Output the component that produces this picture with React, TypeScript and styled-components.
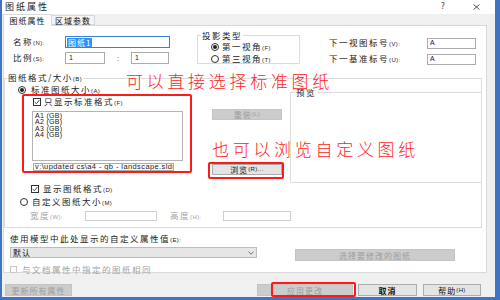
import React from 'react'
import styled, { createGlobalStyle } from 'styled-components'

const CJK = `"Noto Sans CJK SC", "Noto Sans", sans-serif`
const LATIN = `"Liberation Sans", "Noto Sans CJK SC", sans-serif`

const GlobalStyle = createGlobalStyle`
  html, body { margin: 0; padding: 0; }
  body {
    width: 500px;
    height: 300px;
    overflow: hidden;
    background: #3f73c4;
    font-family: ${CJK};
    color: #1b1b1b;
  }
  * { box-sizing: border-box; }
`

const Window = styled.div`
  margin-left: 2px;
  width: 493px;
  height: 297px;
  background: #f0f0f0;
  display: flex;
  flex-direction: column;
`

const TitleBar = styled.div`
  flex: none;
  height: 14px;
  background: #fff;
  display: flex;
  align-items: center;
  padding: 0 15px 0 3px;
`

const TitleText = styled.span`
  font-size: 9px;
  line-height: 10px;
  letter-spacing: 2px;
  color: #222;
`

const Spacer = styled.div`
  flex: 1;
`

const HelpGlyph = styled.span`
  font-family: "DejaVu Sans", sans-serif;
  font-size: 8px;
  line-height: 10px;
  color: #444;
  margin-right: 28px;
`

const TabStrip = styled.div`
  flex: none;
  height: 11px;
  display: flex;
  align-items: flex-end;
  padding-left: 1px;
`

const Tab = styled.div<{ $active?: boolean; $width: number }>`
  position: relative;
  z-index: 1;
  width: ${p => p.$width}px;
  height: ${p => (p.$active ? 12 : 10)}px;
  margin-bottom: ${p => (p.$active ? -1 : 0)}px;
  background: ${p => (p.$active ? '#fff' : '#f4f4f4')};
  border: 1px solid #d9d9d9;
  border-bottom: ${p => (p.$active ? 'none' : '1px solid #d9d9d9')};
  border-left: ${p => (p.$active ? '1px solid #d9d9d9' : 'none')};
  display: flex;
  align-items: center;
  justify-content: center;
  font-size: 8px;
  letter-spacing: 1px;
  line-height: 9px;
  color: #111;
`

const Panel = styled.div`
  flex: none;
  position: relative;
  margin-left: 1px;
  width: 484px;
  height: 248px;
  background: #fff;
  border: 1px solid #d9d9d9;
  display: flex;
  flex-direction: column;
`

const TopSection = styled.div`
  display: flex;
  align-items: flex-start;
  padding-top: 4px;
`

const LeftFields = styled.div`
  margin: 6px 0 0 9px;
  width: 184px;
  display: grid;
  grid-template-columns: 52px auto;
  row-gap: 4px;
  align-items: center;
`

const RightFields = styled.div`
  margin: 7px 0 0 29px;
  display: grid;
  grid-template-columns: 98px 49px;
  row-gap: 4px;
  align-items: center;
`

const FieldLabel = styled.span<{ $muted?: boolean }>`
  font-size: 8.5px;
  letter-spacing: 1.5px;
  line-height: 10px;
  white-space: nowrap;
  color: ${p => (p.$muted ? '#a3a3a3' : '#1b1b1b')};
`

const Mn = styled.span`
  font-family: ${LATIN};
  font-size: 6px;
  letter-spacing: 0.4px;
`

const Field = styled.div<{ $w: number; $h: number; $focus?: boolean; $disabled?: boolean; $pad?: number }>`
  flex: none;
  width: ${p => p.$w}px;
  height: ${p => p.$h}px;
  border: 1px solid ${p => (p.$focus ? '#3b7fdb' : p.$disabled ? '#d0d0d0' : '#ababab')};
  background: #fff;
  display: flex;
  align-items: center;
  padding-left: ${p => p.$pad ?? 3}px;
  font-family: ${LATIN};
  font-size: 7px;
  line-height: 8px;
  color: #222;
  white-space: nowrap;
  overflow: hidden;
`

const Selected = styled.span`
  background: #3390ff;
  color: #fff;
  font-family: ${CJK};
  font-size: 8px;
  letter-spacing: 1px;
  line-height: 9px;
  padding: 0 1px;
`

const RatioRow = styled.div`
  display: flex;
  align-items: center;
`

const Colon = styled.span`
  width: 26px;
  text-align: center;
  font-family: ${LATIN};
  font-size: 7px;
  color: #333;
`

const Group = styled.fieldset<{ $w?: number; $h?: number; $noRight?: boolean }>`
  margin: 0;
  padding: 0;
  min-width: 0;
  border: 1px solid #dcdcdc;
  ${p => (p.$noRight ? 'border-right: none;' : '')}
  ${p => (p.$w ? `width: ${p.$w}px;` : '')}
  ${p => (p.$h ? `height: ${p.$h}px;` : '')}
  display: flex;
  flex-direction: column;
`

const Legend = styled.legend<{ $offset: number }>`
  margin-left: ${p => p.$offset}px;
  padding: 0 1px;
  font-size: 8.5px;
  letter-spacing: 1.5px;
  line-height: 10px;
  color: #1b1b1b;
  white-space: nowrap;
`

const FormatGroup = styled(Group)`
  margin-top: 7px;
  width: 478px;
  padding-bottom: 6px;
`

const OptionRow = styled.div<{ $top: number; $indent: number; $gap: number; $muted?: boolean }>`
  display: flex;
  align-items: center;
  height: 8px;
  margin-top: ${p => p.$top}px;
  padding-left: ${p => p.$indent}px;
  gap: ${p => p.$gap}px;
  font-size: 8.5px;
  letter-spacing: 1.5px;
  line-height: 8px;
  white-space: nowrap;
  color: ${p => (p.$muted ? '#a3a3a3' : '#1b1b1b')};
`

const Radio = styled.span<{ $on?: boolean }>`
  flex: none;
  width: 8px;
  height: 8px;
  border-radius: 50%;
  border: 1px solid #333;
  background: #fff;
  display: flex;
  align-items: center;
  justify-content: center;
  &::after {
    content: '';
    width: 4px;
    height: 4px;
    border-radius: 50%;
    background: ${p => (p.$on ? '#222' : 'transparent')};
  }
`

const Box = styled.span<{ $size?: number; $disabled?: boolean }>`
  flex: none;
  width: ${p => p.$size ?? 8}px;
  height: ${p => p.$size ?? 8}px;
  border: 1px solid ${p => (p.$disabled ? '#c8c8c8' : '#333')};
  background: #fff;
  display: flex;
  align-items: center;
  justify-content: center;
`

const Check = ({ on, size, disabled }: { on?: boolean; size?: number; disabled?: boolean }) => (
  <Box $size={size} $disabled={disabled}>
    {on && (
      <svg width="6" height="6" viewBox="0 0 6 6">
        <path d="M0.7 3.1 L2.4 4.7 L5.3 1.1" stroke="#333" strokeWidth="0.9" fill="none" />
      </svg>
    )}
  </Box>
)

const MainRow = styled.div`
  display: flex;
  align-items: flex-start;
`

const RedFrame = styled.div`
  border: 2px solid #ff1a1a;
  border-radius: 2px;
`

const StandardBox = styled(RedFrame)`
  margin-left: 17px;
  width: 170px;
  height: 79px;
  padding-top: 2px;
  display: flex;
  flex-direction: column;
`

const ListBox = styled.div`
  margin: 5px 0 0 8px;
  width: 151px;
  height: 50px;
  border: 1px solid #b4b4b4;
  padding: 1px 0 0 2px;
  font-family: ${LATIN};
  font-size: 7px;
  letter-spacing: 0.3px;
  line-height: 6.3px;
  color: #222;
`

const PathField = styled(Field)`
  margin: 2px 0 0 9px;
  font-size: 7.5px;
  letter-spacing: 0.4px;
`

const MiddleCol = styled.div`
  margin-left: 16px;
  width: 76px;
  display: flex;
  flex-direction: column;
`

const Button = styled.button<{ $w: number; $h?: number; $disabled?: boolean; $bold?: boolean }>`
  flex: none;
  width: ${p => p.$w}px;
  height: ${p => p.$h ?? 12}px;
  margin: 0;
  padding: 0;
  background: ${p => (p.$disabled ? '#cccccc' : '#e4e4e4')};
  border: 1px solid ${p => (p.$disabled ? '#c4c4c4' : '#adadad')};
  color: ${p => (p.$disabled ? '#9d9d9d' : '#111')};
  font-family: ${CJK};
  font-size: 8px;
  font-weight: ${p => (p.$bold ? 700 : 400)};
  letter-spacing: 1px;
  line-height: 9px;
  display: flex;
  align-items: center;
  justify-content: center;
  white-space: nowrap;
`

const ReloadButton = styled(Button)`
  margin: 15px 0 0 4px;
`

const BrowseFrame = styled(RedFrame)`
  margin-top: 42px;
  padding: 0 0 2px 2px;
`

const PreviewGroup = styled(Group)`
  margin: -7px 0 0 6px;
  flex: 1;
  height: 96px;
`

const SizeRow = styled.div`
  display: flex;
  align-items: center;
  height: 10px;
  margin-top: 5px;
  padding-left: 25px;
`

const SizeLabel = styled(FieldLabel)<{ $w: number; $ml?: number }>`
  width: ${p => p.$w}px;
  margin-left: ${p => p.$ml ?? 0}px;
`

const PropLabel = styled(FieldLabel)`
  margin: 5px 0 0 6px;
`

const SelectRow = styled.div`
  display: flex;
  align-items: flex-start;
  margin-top: 2px;
`

const Select = styled.div`
  margin-left: 6px;
  width: 247px;
  height: 11px;
  background: #e6e6e6;
  border: 1px solid #bdbdbd;
  display: flex;
  align-items: center;
  justify-content: space-between;
  padding: 0 2px 0 2px;
  font-size: 8px;
  letter-spacing: 1px;
  line-height: 9px;
  color: #111;
`

const PickButton = styled(Button)`
  margin: 2px 0 0 38px;
`

const Annotation = styled.div<{ $x: number; $y: number }>`
  position: absolute;
  left: ${p => p.$x}px;
  top: ${p => p.$y}px;
  font-size: 17px;
  font-weight: 300;
  line-height: 17px;
  letter-spacing: 3.7px;
  color: #ff2424;
  white-space: nowrap;
  pointer-events: none;
`

const BottomBar = styled.div`
  position: relative;
  flex: 1;
  display: flex;
  align-items: flex-start;
  padding-top: 11px;
`

const ApplyMark = styled(RedFrame)`
  position: absolute;
  left: 269px;
  top: 9px;
  width: 85px;
  height: 15px;
`

const BarButton = styled(Button)<{ $ml: number }>`
  margin-left: ${p => p.$ml}px;
`

const CloseIcon = () => (
  <svg width="7" height="6" viewBox="0 0 7 6">
    <path d="M0.5 0.5 L6.5 5.5 M0.5 5.5 L6.5 0.5" stroke="#444" strokeWidth="0.9" />
  </svg>
)

const Chevron = () => (
  <svg width="6" height="4" viewBox="0 0 6 4">
    <path d="M0.5 0.8 L3 3.2 L5.5 0.8" stroke="#555" strokeWidth="0.8" fill="none" />
  </svg>
)

const sheets = ['A1 (GB)', 'A2 (GB)', 'A3 (GB)', 'A4 (GB)']

export default function App() {
  return (
    <>
      <GlobalStyle />
      <Window>
        <TitleBar>
          <TitleText>图纸属性</TitleText>
          <Spacer />
          <HelpGlyph>?</HelpGlyph>
          <CloseIcon />
        </TitleBar>

        <TabStrip>
          <Tab $active $width={49}>图纸属性</Tab>
          <Tab $width={43}>区域参数</Tab>
        </TabStrip>

        <Panel>
          <TopSection>
            <LeftFields>
              <FieldLabel>名称<Mn>(N):</Mn></FieldLabel>
              <Field $w={105} $h={12} $focus $pad={1}>
                <Selected>图纸1</Selected>
              </Field>
              <FieldLabel>比例<Mn>(S):</Mn></FieldLabel>
              <RatioRow>
                <Field $w={40} $h={12}>1</Field>
                <Colon>:</Colon>
                <Field $w={38} $h={12}>1</Field>
              </RatioRow>
            </LeftFields>

            <Group $w={103} $h={34}>
              <Legend $offset={3}>投影类型</Legend>
              <OptionRow $top={3} $indent={13} $gap={3}>
                <Radio $on />
                <span>第一视角<Mn>(F)</Mn></span>
              </OptionRow>
              <OptionRow $top={4} $indent={13} $gap={3}>
                <Radio />
                <span>第三视角<Mn>(T)</Mn></span>
              </OptionRow>
            </Group>

            <RightFields>
              <FieldLabel>下一视图标号<Mn>(V):</Mn></FieldLabel>
              <Field $w={49} $h={11} $pad={2}>A</Field>
              <FieldLabel>下一基准标号<Mn>(U):</Mn></FieldLabel>
              <Field $w={49} $h={11} $pad={2}>A</Field>
            </RightFields>
          </TopSection>

          <FormatGroup>
            <Legend $offset={2}>图纸格式/大小<Mn>(B)</Mn></Legend>
            <OptionRow $top={2} $indent={13} $gap={5}>
              <Radio $on />
              <span>标准图纸大小<Mn>(A)</Mn></span>
            </OptionRow>

            <MainRow>
              <StandardBox>
                <OptionRow $top={0} $indent={9} $gap={3}>
                  <Check on />
                  <span>只显示标准格式<Mn>(F)</Mn></span>
                </OptionRow>
                <ListBox>
                  {sheets.map(s => (
                    <div key={s}>{s}</div>
                  ))}
                </ListBox>
                <PathField $w={141} $h={8} $pad={1}>
                  v:\updated cs\a4 - gb - landscape.sldr
                </PathField>
              </StandardBox>

              <MiddleCol>
                <ReloadButton $w={70} $h={11} $disabled>重装<Mn>(L)</Mn></ReloadButton>
                <BrowseFrame>
                  <Button $w={70} $h={11}>浏览<Mn>(R)...</Mn></Button>
                </BrowseFrame>
              </MiddleCol>

              <PreviewGroup $noRight>
                <Legend $offset={4}>预览</Legend>
              </PreviewGroup>
            </MainRow>

            <OptionRow $top={2} $indent={26} $gap={4}>
              <Check on />
              <span>显示图纸格式<Mn>(D)</Mn></span>
            </OptionRow>
            <OptionRow $top={5} $indent={15} $gap={4}>
              <Radio />
              <span>自定义图纸大小<Mn>(M)</Mn></span>
            </OptionRow>
            <SizeRow>
              <SizeLabel $w={55} $muted>宽度<Mn>(W):</Mn></SizeLabel>
              <Field $w={72} $h={10} $disabled />
              <SizeLabel $w={53} $ml={13} $muted>高度<Mn>(H):</Mn></SizeLabel>
              <Field $w={68} $h={10} $disabled />
            </SizeRow>
          </FormatGroup>

          <PropLabel>使用模型中此处显示的自定义属性值<Mn>(E):</Mn></PropLabel>
          <SelectRow>
            <Select>
              <span>默认</span>
              <Chevron />
            </Select>
            <PickButton $w={160} $disabled>选择要修改的图纸</PickButton>
          </SelectRow>
          <OptionRow $top={4} $indent={6} $gap={5} $muted>
            <Check size={7} disabled />
            <span>与文档属性中指定的图纸相同</span>
          </OptionRow>

          <Annotation $x={122} $y={46}>可以直接选择标准图纸</Annotation>
          <Annotation $x={208} $y={114}>也可以浏览自定义图纸</Annotation>
        </Panel>

        <BottomBar>
          <BarButton $ml={3} $w={67} $disabled>更新所有属性</BarButton>
          <BarButton $ml={185} $w={96} $disabled>应用更改</BarButton>
          <BarButton $ml={5} $w={59} $bold>取消</BarButton>
          <BarButton $ml={6} $w={58}>帮助<Mn>(H)</Mn></BarButton>
          <ApplyMark />
        </BottomBar>
      </Window>
    </>
  )
}
